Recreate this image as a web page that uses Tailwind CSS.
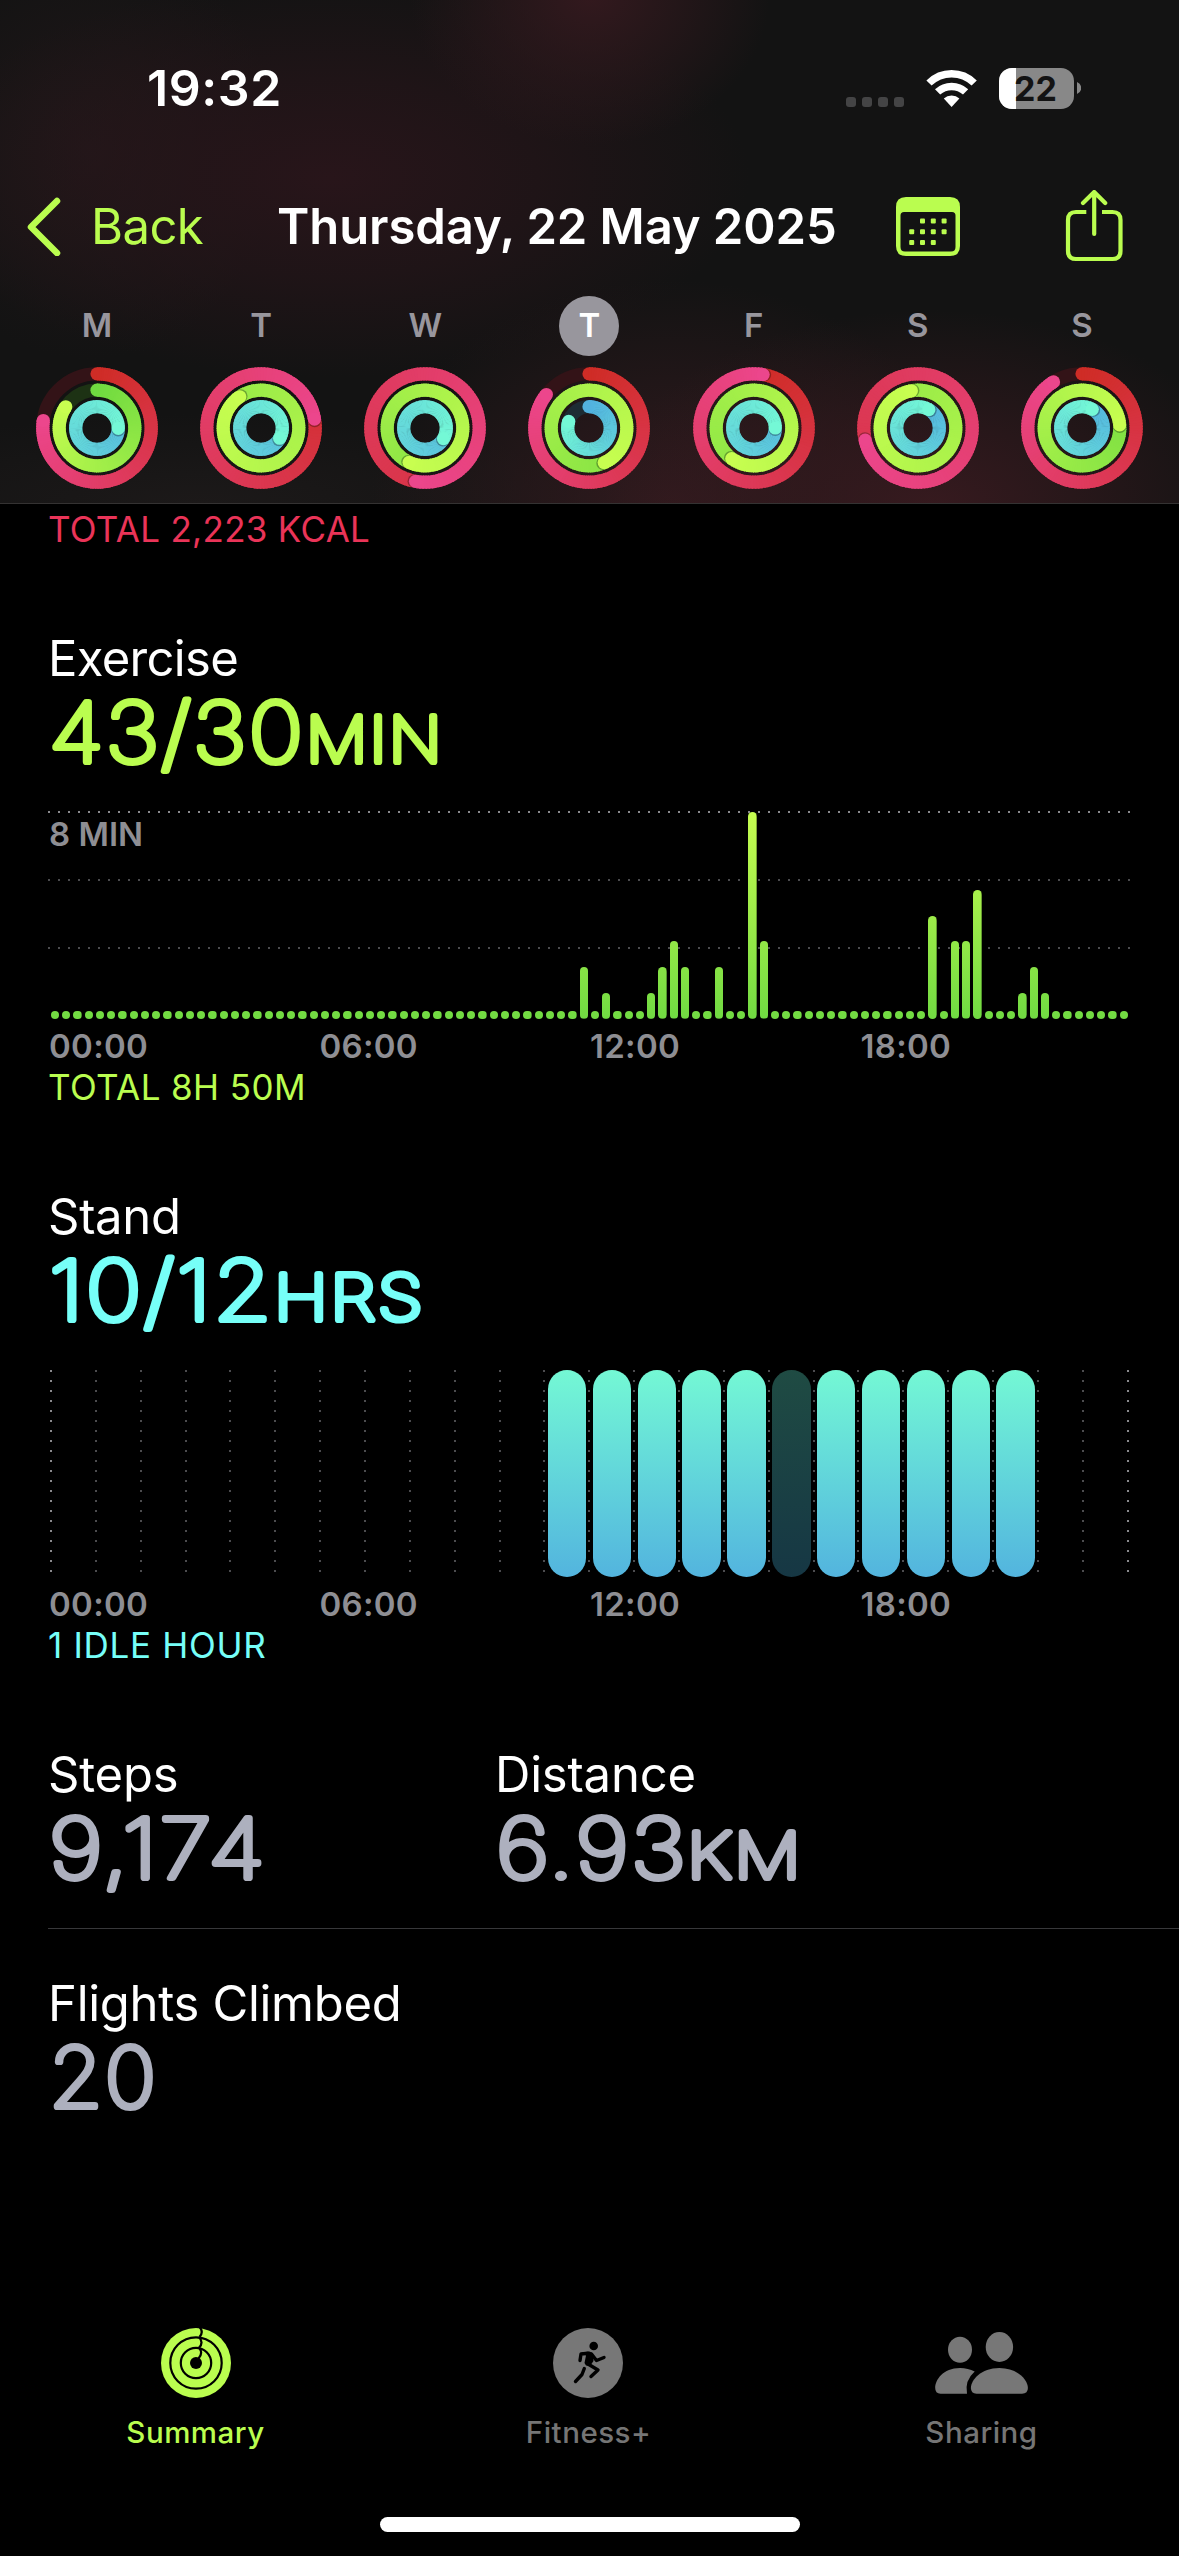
<!DOCTYPE html>
<html lang="en">
<head>
    <meta charset="UTF-8">
    <meta name="viewport" content="width=device-width, initial-scale=1.0">
    <title>Activity - Thursday, 22 May 2025</title>
    <script src="https://cdn.jsdelivr.net/npm/@tailwindcss/browser@4"></script>
    <style>
        body {
            font-family: Inter, 'Liberation Sans', sans-serif;
        }
        .header-glow {
            background:
                radial-gradient(ellipse 180px 150px at 590px -5px, #33191e, #33191e80 50%, #33191e00),
                radial-gradient(ellipse 420px 200px at 330px 178px, #28151a, #28151a90 50%, #28151a00),
                radial-gradient(ellipse 190px 210px at 90px 150px, #25191bb0, #25191b00),
                radial-gradient(ellipse 330px 200px at 930px 510px, #371a1f, #371a1f90 45%, #371a1f00),
                radial-gradient(ellipse 300px 230px at 670px 510px, #311a1e, #311a1e90 45%, #311a1e00),
                radial-gradient(ellipse 400px 90px at 200px 504px, #1f1b1bc0, #1f1b1b00),
                #131313;
        }
        .value {
            overflow: visible;
        }
        .value text {
            stroke: currentColor;
            stroke-width: 6.2;
            stroke-linejoin: round;
            fill: currentColor;
            font-weight: 100;
            letter-spacing: 2px;
        }
        .dots-x {
            height: 2px;
            background: repeating-linear-gradient(90deg, currentColor 0 2px, transparent 2px 10px);
        }
        .dots-y {
            width: 2px;
            background: repeating-linear-gradient(180deg, currentColor 0 2px, transparent 2px 10px);
        }
    </style>
</head>
<body class="bg-black">
    <div class="w-[1179px] h-[2556px] overflow-hidden flex flex-col text-white">

        <!-- Header -->
        <header class="header-glow h-[504px] shrink-0 pt-[58px] border-b border-[#343232]">
            <div class="h-[60px] flex items-center pl-[147px] pr-[98px]">
                <span class="text-[50px] leading-[60px] font-semibold tracking-[0.6px]">19:32</span>
                <svg class="ml-auto w-[236px] h-[44px]" viewBox="845 65 236 44">
                    <g fill="#444445">
                        <rect x="846" y="96" width="10" height="10" rx="3"/>
                        <rect x="862" y="96" width="10" height="10" rx="3"/>
                        <rect x="878" y="96" width="10" height="10" rx="3"/>
                        <rect x="894" y="96" width="10" height="10" rx="3"/>
                    </g>
                    <!-- wifi -->
                    <path fill="#fff" d="M926.4 79.4Q937 69 951.6 69T976.8 79.4L971.6 84.6Q963 76.5 951.6 76.5T931.6 84.6Z"/>
                    <path fill="#fff" d="M935 88.3Q942 81.8 951.6 81.8T968.2 88.3L963 93.6Q958 89.3 951.6 89.3T940.2 93.6Z"/>
                    <path fill="#fff" d="M943.8 97.4Q947 94.5 951.6 94.5T959.4 97.4L951.6 106Z"/>
                    <!-- battery -->
                    <clipPath id="battery"><rect x="999" y="67" width="75" height="41" rx="13"/></clipPath>
                    <g clip-path="url(#battery)">
                        <rect x="999" y="67" width="75" height="41" fill="#888"/>
                        <rect x="999" y="67" width="17" height="41" fill="#fff"/>
                    </g>
                    <path fill="#888" d="M1077 81Q1081.2 83 1081.2 87T1077 93Z"/>
                    <text x="1035.5" y="100" text-anchor="middle" font-size="34" font-weight="700" textLength="43" fill="#131313">22</text>
                </svg>
            </div>

            <div class="h-[72px] mt-[72px] flex items-center pl-[26px] text-[49px] leading-[60px]">
                <svg class="w-[36px] h-[60px]" viewBox="0 0 36 60" fill="none" stroke="#bafd4f" stroke-width="6.5" stroke-linecap="round" stroke-linejoin="round">
                    <path d="M31 5L5 31L31 57"/>
                </svg>
                <span class="ml-[29px] w-[186px] pt-[2px] text-[#bafd4f] tracking-[-0.6px]">Back</span>
                <h1 class="w-[619px] pt-[2px] font-semibold tracking-[-0.1px] whitespace-nowrap">Thursday, 22 May 2025</h1>
                <svg class="w-[64px] h-[60px] shrink-0" viewBox="896 196 64 60">
                    <path fill="#bafd4f" fill-rule="evenodd" d="M906 197H950Q960 197 960 207V246Q960 256 950 256H906Q896 256 896 246V207Q896 197 906 197ZM904 212Q900.500 212 900.500 215.500V247Q900.500 251.500 905 251.500H951Q955.500 251.500 955.500 247V215.500Q955.500 212 952 212Z"/>
                    <g fill="#bafd4f">
                        <rect x="920" y="218.600" width="5" height="5" rx="1"/><rect x="930.800" y="218.600" width="5" height="5" rx="1"/><rect x="941.600" y="218.600" width="5" height="5" rx="1"/>
                        <rect x="909.200" y="229.300" width="5" height="5" rx="1"/><rect x="920" y="229.300" width="5" height="5" rx="1"/><rect x="930.800" y="229.300" width="5" height="5" rx="1"/><rect x="941.600" y="229.300" width="5" height="5" rx="1"/>
                        <rect x="909.200" y="240" width="5" height="5" rx="1"/><rect x="920" y="240" width="5" height="5" rx="1"/><rect x="930.800" y="240" width="5" height="5" rx="1"/>
                    </g>
                </svg>
                <svg class="ml-[105px] w-[58px] h-[72px] shrink-0" viewBox="1065 190 58 72" fill="none" stroke="#bafd4f" stroke-width="4.200" stroke-linejoin="round">
                    <path d="M1086.300 212H1076Q1068 212 1068 220V251Q1068 259 1076 259H1112.500Q1120.500 259 1120.500 251V220Q1120.500 212 1112.500 212H1102"/>
                    <path stroke-linecap="round" d="M1094.200 192.500V234M1083 203L1094.200 192L1105.200 203"/>
                </svg>
            </div>

            <!-- Week rings -->
            <div id="week" class="mt-[34px] px-[15px] grid grid-cols-7 justify-items-center text-[33px] font-semibold text-[#98969d]"></div>
        </header>

        <main class="pl-[48px]">
            <p class="pt-[7px] pb-px text-[35px] leading-[36px] text-[#ea3458] tracking-[0.3px]">TOTAL 2,223 KCAL</p>

            <!-- Exercise -->
            <section class="mt-[81px]">
                <h2 class="text-[49px] leading-[60px] tracking-[-0.7px]">Exercise</h2>
                <svg class="value w-[600px] h-[90px] text-[#bafd4f]" viewBox="48 0 600 90">
                    <text x="49" y="73" font-size="82" textLength="256" lengthAdjust="spacingAndGlyphs">43/30</text>
                    <text x="306" y="73" font-size="63" textLength="138" lengthAdjust="spacingAndGlyphs">MIN</text>
                </svg>
                <div class="relative mt-[32px] h-[208px] w-[1082px] flex flex-col">
                    <div class="dots-x text-[#8a8a8e]"></div>
                    <span class="mt-[3px] h-[36px] pl-[1px] text-[33px] leading-[36px] font-semibold text-[#8e8e93]">8 MIN</span>
                    <div class="dots-x mt-[27px] text-[#4c4c4f]"></div>
                    <div class="dots-x mt-[66px] text-[#4c4c4f]"></div>
                    <div id="exercise" class="absolute left-[1.3px] bottom-0 w-[1080px] h-[208px] flex items-end"></div>
                </div>
                <div class="mt-[9px] w-[1083px] pl-[1px] grid grid-cols-4 text-[33px] leading-[36px] font-semibold text-[#8e8e93] tracking-[0.3px]">
                    <span>00:00</span><span>06:00</span><span>12:00</span><span>18:00</span>
                </div>
                <p class="mt-[5px] text-[35px] leading-[36px] text-[#bafd4f] tracking-[0.4px]">TOTAL 8H 50M</p>
            </section>

            <!-- Stand -->
            <section class="mt-[82px]">
                <h2 class="text-[49px] leading-[60px] tracking-[-0.3px]">Stand</h2>
                <svg class="value w-[600px] h-[90px] text-[#76fff8]" viewBox="48 0 600 90">
                    <text x="49" y="73" font-size="82" textLength="225" lengthAdjust="spacingAndGlyphs">10/12</text>
                    <text x="274" y="73" font-size="63" textLength="151" lengthAdjust="spacingAndGlyphs">HRS</text>
                </svg>
                <div id="stand" class="mt-[33px] ml-[2px] h-[207px] w-[1122px] flex"></div>
                <div class="mt-[9px] w-[1083px] pl-[1px] grid grid-cols-4 text-[33px] leading-[36px] font-semibold text-[#8e8e93] tracking-[0.3px]">
                    <span>00:00</span><span>06:00</span><span>12:00</span><span>18:00</span>
                </div>
                <p class="mt-[5px] text-[35px] leading-[36px] text-[#76fff8] tracking-[0.7px]">1 IDLE HOUR</p>
            </section>

            <!-- Totals -->
            <section class="mt-[82px] flex text-[#adb0be]">
                <div class="w-[447px]">
                    <h2 class="text-[49px] leading-[60px] tracking-[-0.2px] text-white">Steps</h2>
                    <svg class="value w-[400px] h-[90px]" viewBox="48 0 400 90">
                        <text x="49" y="73" font-size="82" textLength="218" lengthAdjust="spacingAndGlyphs">9,174</text>
                    </svg>
                </div>
                <div>
                    <h2 class="text-[49px] leading-[60px] tracking-[-0.2px] text-white">Distance</h2>
                    <svg class="value w-[400px] h-[90px]" viewBox="495 0 400 90">
                        <text x="496" y="73" font-size="82" textLength="192" lengthAdjust="spacingAndGlyphs">6.93</text>
                        <text x="687" y="73" font-size="63" textLength="116" lengthAdjust="spacingAndGlyphs">KM</text>
                    </svg>
                </div>
            </section>
            <section class="mt-[33px] pt-[45px] border-t border-[#38383a] text-[#adb0be]">
                <h2 class="text-[49px] leading-[60px] tracking-[-0.3px] text-white">Flights Climbed</h2>
                <svg class="value w-[400px] h-[90px]" viewBox="48 0 400 90">
                    <text x="49" y="73" font-size="82" textLength="109" lengthAdjust="spacingAndGlyphs">20</text>
                </svg>
            </section>
        </main>

        <!-- Tab bar -->
        <footer class="mt-auto pb-[24px]">
            <nav class="-ml-px mr-px grid grid-cols-3 text-[29.5px] leading-[36px] font-medium text-[#757575] text-center tracking-[0.5px]">
                <div class="flex flex-col items-center gap-[16px] text-[#bafd4f]">
                    <svg class="w-[70px] h-[70px]" viewBox="-35 -35 70 70">
                        <circle r="35" fill="currentColor"/>
                        <circle r="6" fill="#000"/>
                        <g fill="none" stroke="#000" stroke-width="2.200">
                            <circle r="25.700"/>
                            <circle r="15.200"/>
                            <path d="M3.500 -36Q8 -31 3.500 -26M3 -26Q8 -20.500 3 -15.200M3 -15.200Q7.500 -10 2.500 -4.500"/>
                        </g>
                    </svg>
                    <span>Summary</span>
                </div>
                <div class="flex flex-col items-center gap-[16px]">
                    <svg class="w-[72px] h-[70px]" viewBox="-1 0 72 70">
                        <circle cx="34" cy="35" r="35" fill="#777"/>
                        <circle cx="39.700" cy="18" r="4.300"/>
                        <path d="M27.500 24.500L35.500 23.500Q38 24 39 26L39.500 33L36 38L32 37.500L30.500 35L32 27.500Z"/>
                        <g fill="none" stroke="#000" stroke-width="3.400" stroke-linecap="round" stroke-linejoin="round">
                            <path d="M34 25.300L27 26L26 32.500"/>
                            <path d="M37.500 26L42.500 32.500L50 29.500"/>
                            <path d="M34 36L44 42L37 48.500"/>
                            <path d="M30.300 40.500L28 46.500L21.500 53.500"/>
                        </g>
                    </svg>
                    <span>Fitness+</span>
                </div>
                <div class="flex flex-col items-center gap-[16px]">
                    <svg class="w-[94px] h-[70px]" viewBox="935 2328 94 70" fill="#777">
                        <ellipse cx="960" cy="2349.700" rx="12" ry="13"/>
                        <ellipse cx="999.400" cy="2347" rx="13.700" ry="15"/>
                        <path d="M970.900 2388C970.900 2380 981 2368 999.400 2368S1027.900 2380 1027.900 2388Q1027.900 2393.700 1022 2393.700H976.500Q970.900 2393.700 970.900 2388Z"/>
                        <path d="M935.200 2388C935.200 2380 943 2368 960 2368Q968 2368 974.700 2371.500Q964.500 2380.500 967 2393.700H940.500Q935.200 2393.700 935.200 2388Z"/>
                    </svg>
                    <span>Sharing</span>
                </div>
            </nav>
            <div class="mt-[67px] mx-auto w-[420px] h-[15px] rounded-full bg-white"></div>
        </footer>
    </div>

    <script>
        // move, exercise, stand as a share of each goal
        const week = [
            ['M', 0.772, 0.845, 1.253],
            ['T', 1.224, 1.905, 1.33],
            ['W', 1.528, 1.569, 1.333],
            ['T', 0.856, 1.434, 0.80],
            ['F', 1.027, 1.60, 1.25],
            ['S', 1.714, 1.972, 1.085],
            ['S', 0.912, 1.237, 1.08]
        ];
        const today = 3;
        const rings = [
            { r: 54.2, from: [207, 44, 38], to: [236, 70, 140], track: '#331317' },
            { r: 37.8, from: [112, 218, 64], to: [200, 254, 80], track: '#1d3214' },
            { r: 21.3, from: [82, 178, 224], to: [116, 248, 214], track: '#1d2c34' }
        ];

        function mix(a, b, t) {
            return 'rgb(' + a.map((v, i) => Math.round(v + (b[i] - v) * t)).join(',') + ')';
        }

        function point(r, t) {
            const a = t * 2 * Math.PI;
            return [(r * Math.sin(a)).toFixed(2), (-r * Math.cos(a)).toFixed(2)];
        }

        function drawRing(ring, value) {
            const steps = 120;
            const start = Math.max(0, value - 1);
            let out = `<circle r="${ring.r}" fill="none" stroke="${ring.track}" stroke-width="13.2"/>`;
            if (value < 1) {
                out += `<circle cx="0" cy="${-ring.r}" r="6.6" fill="${mix(ring.from, ring.to, 0)}"/>`;
            }
            for (let i = 0; i < steps; i++) {
                const t0 = start + (value - start) * i / steps;
                const t1 = start + (value - start) * (i + 1) / steps + (i < steps - 1 ? 0.004 : 0);
                const [x0, y0] = point(ring.r, t0);
                const [x1, y1] = point(ring.r, t1);
                out += `<path d="M${x0} ${y0}A${ring.r} ${ring.r} 0 0 1 ${x1} ${y1}" fill="none" stroke="${mix(ring.from, ring.to, t0 / value)}" stroke-width="13.2"/>`;
            }
            const [x, y] = point(ring.r, value);
            if (value > 1) {
                const [sx, sy] = point(ring.r, value + 0.2 / ring.r);
                out += `<circle cx="${sx}" cy="${sy}" r="6.8" fill="#000" fill-opacity="0.3"/>`;
            }
            return out + `<circle cx="${x}" cy="${y}" r="6.6" fill="${mix(ring.from, ring.to, 1)}"/>`;
        }

        document.getElementById('week').innerHTML = week.map(([day, ...values], i) => `
            <div class="flex flex-col items-center gap-[11px]">
                <span class="w-[60px] h-[60px] rounded-full flex items-center justify-center ${i === today ? 'bg-[#98969d] text-white' : ''}">${day}</span>
                <svg class="w-[122px] h-[122px]" viewBox="-61 -61 122 122">${rings.map((ring, n) => drawRing(ring, values[n])).join('')}</svg>
            </div>`).join('');

        // exercise minutes per quarter hour
        const minutes = { 47: 2, 49: 1, 53: 1, 54: 2, 55: 3, 56: 2, 59: 2, 62: 8, 63: 3, 78: 4, 80: 3, 81: 3, 82: 5, 86: 1, 87: 2, 88: 1 };
        let bars = '';
        for (let i = 0; i < 96; i++) {
            const height = minutes[i] ? minutes[i] * 25.85 : 8.3;
            bars += `<div class="flex-1 flex justify-center"><div class="w-[8.3px] rounded-full bg-linear-to-t from-[#70da42] to-[#c6fd50] bg-[length:100%_207px] bg-bottom bg-no-repeat" style="height:${height}px"></div></div>`;
        }
        document.getElementById('exercise').innerHTML = bars;

        // one column per hour, closed by the midnight line
        let hours = '';
        for (let h = 0; h <= 24; h++) {
            const edge = h === 0 || h === 24;
            let bar = '';
            if (h >= 11 && h <= 21) {
                bar = `<div class="ml-[2.4px] w-[38.4px] rounded-full bg-linear-to-b ${h === 16 ? 'from-[#1f4b43] to-[#163744]' : 'from-[#74f8d4] to-[#53b4de]'}"></div>`;
            }
            hours += `<div class="w-[44.87px] shrink-0 flex"><div class="dots-y h-[202px] shrink-0 ${edge ? 'text-[#8a8a8e]' : 'text-[#4c4c4f]'}"></div>${bar}</div>`;
        }
        document.getElementById('stand').innerHTML = hours;
    </script>
</body>
</html>
